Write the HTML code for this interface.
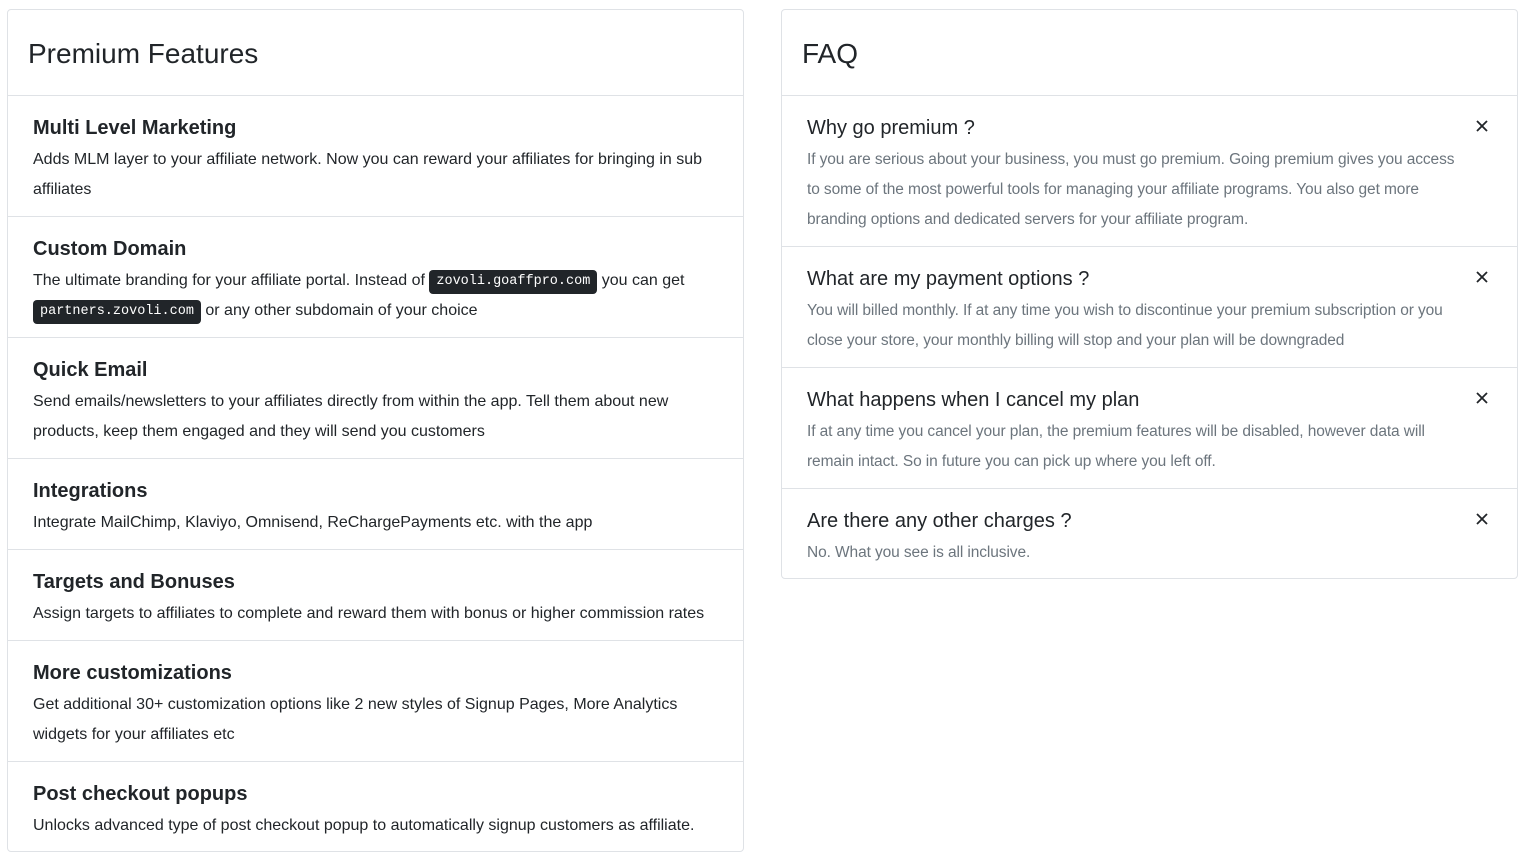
<!DOCTYPE html>
<html><head><style>
body{margin:0;background:#fff;font-family:"Liberation Sans",sans-serif;color:#212529;}
.card{position:absolute;top:9px;width:735px;border:1px solid #dfe2e6;border-radius:4px;box-sizing:border-box;}
.hd{height:85px;border-bottom:1px solid #dfe2e6;padding-left:20px;font-size:28px;line-height:88px;}
.it{border-bottom:1px solid #dfe2e6;padding:16px 25px 11px 25px;position:relative}
.it:last-child{border-bottom:none}
.t{font-size:20px;font-weight:bold;line-height:33px;}
.d{font-size:16px;line-height:30px;}
.q{font-size:20px;line-height:33px;}
.a{font-size:15.5px;line-height:30px;color:#6c757d;padding-right:28px;letter-spacing:-0.1px}
code{font-family:"Liberation Mono",monospace;font-size:13.5px;background:#212529;color:#fff;padding:0 7px;border-radius:4px;display:inline-block;line-height:24px;vertical-align:1px}
.x{position:absolute;right:29px;top:24px;width:12px;height:12px}
</style></head><body>
<div class="card" style="left:7px;width:737px;height:843px">
<div class="hd">Premium Features</div>
<div class="it"><div class="t">Multi Level Marketing</div><div class="d">Adds MLM layer to your affiliate network. Now you can reward your affiliates for bringing in sub affiliates</div></div>
<div class="it"><div class="t">Custom Domain</div><div class="d">The ultimate branding for your affiliate portal. Instead of <code>zovoli.goaffpro.com</code> you can get <code>partners.zovoli.com</code> or any other subdomain of your choice</div></div>
<div class="it"><div class="t">Quick Email</div><div class="d">Send emails/newsletters to your affiliates directly from within the app. Tell them about new products, keep them engaged and they will send you customers</div></div>
<div class="it"><div class="t">Integrations</div><div class="d">Integrate MailChimp, Klaviyo, Omnisend, ReChargePayments etc. with the app</div></div>
<div class="it"><div class="t">Targets and Bonuses</div><div class="d">Assign targets to affiliates to complete and reward them with bonus or higher commission rates</div></div>
<div class="it"><div class="t">More customizations</div><div class="d">Get additional 30+ customization options like 2 new styles of Signup Pages, More Analytics widgets for your affiliates etc</div></div>
<div class="it"><div class="t">Post checkout popups</div><div class="d">Unlocks advanced type of post checkout popup to automatically signup customers as affiliate.</div></div>
</div>
<div class="card" style="left:781px;width:737px;height:570px">
<div class="hd">FAQ</div>
<div class="it"><div class="q">Why go premium ?</div><div class="a">If you are serious about your business, you must go premium. Going premium gives you access to some of the most powerful tools for managing your affiliate programs. You also get more branding options and dedicated servers for your affiliate program.</div><svg class="x" viewBox="0 0 12 12"><path d="M1 1L11 11M11 1L1 11" stroke="#212529" stroke-width="1.8"/></svg></div>
<div class="it"><div class="q">What are my payment options ?</div><div class="a">You will billed monthly. If at any time you wish to discontinue your premium subscription or you close your store, your monthly billing will stop and your plan will be downgraded</div><svg class="x" viewBox="0 0 12 12"><path d="M1 1L11 11M11 1L1 11" stroke="#212529" stroke-width="1.8"/></svg></div>
<div class="it"><div class="q">What happens when I cancel my plan</div><div class="a">If at any time you cancel your plan, the premium features will be disabled, however data will remain intact. So in future you can pick up where you left off.</div><svg class="x" viewBox="0 0 12 12"><path d="M1 1L11 11M11 1L1 11" stroke="#212529" stroke-width="1.8"/></svg></div>
<div class="it"><div class="q">Are there any other charges ?</div><div class="a">No. What you see is all inclusive.</div><svg class="x" viewBox="0 0 12 12"><path d="M1 1L11 11M11 1L1 11" stroke="#212529" stroke-width="1.8"/></svg></div>
</div>
</body></html>
